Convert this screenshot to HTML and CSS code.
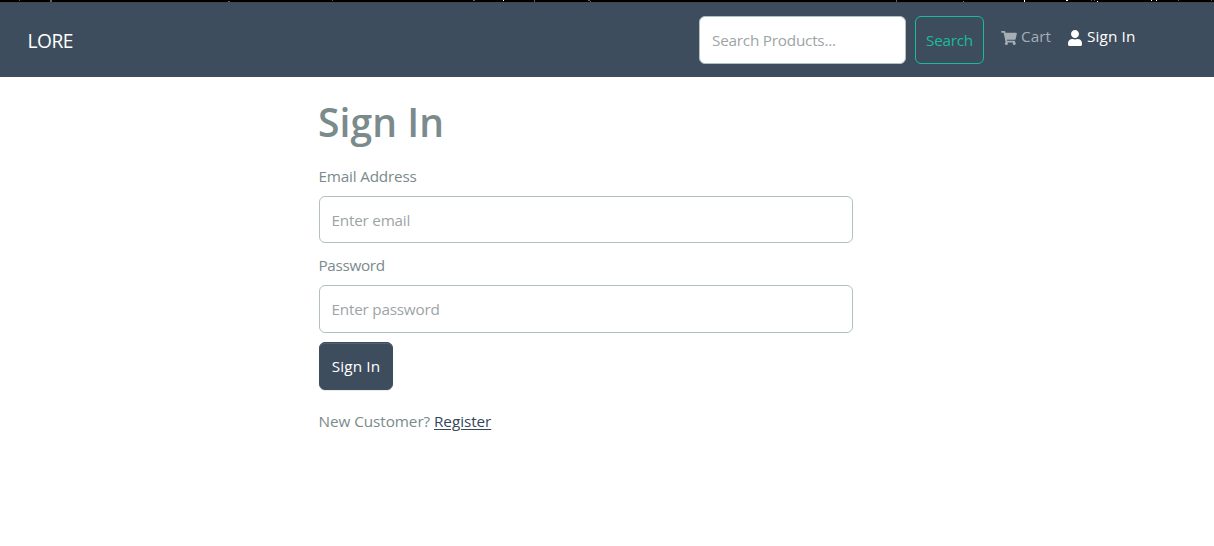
FILE: index.html
```
<!DOCTYPE html>
<html lang="en">
<head>
<meta charset="utf-8">
<title>LORE - Sign In</title>
<link rel="stylesheet" href="styles.css">
</head>
<body>
<div class="strip">
<svg width="1214" height="2" viewBox="0 0 1214 2" shape-rendering="crispEdges"><path fill="#59607f" d="M19 0h1v1h-1zM50 0h2v2h-2zM228 1h2v1h-2zM332 0h1v1h-1zM473 0h2v1h-2zM534 0h1v2h-1zM588 0h2v1h-2zM590 1h1v1h-1zM896 0h1v2h-1zM1091 0h1v1h-1zM1094 0h1v1h-1zM1178 0h1v1h-1zM1211 0h1v1h-1z"/><path fill="#777" d="M963 1h1v1h-1z"/><path fill="#fff" d="M503 0h1v1h-1zM1024 0h1v2h-1zM1066 0h2v1h-2zM1097 1h1v1h-1zM1151 0h1v1h-1zM1156 0h1v1h-1z"/></svg>
</div>
<header class="navbar">
  <a class="brand">LORE</a>
  <form class="search">
    <input class="search-input" type="text" placeholder="Search Products...">
    <button class="search-button" type="button">Search</button>
  </form>
  <nav class="links">
    <a class="link cart"><svg class="cart-icon" viewBox="0 0 576 512"><path fill="currentColor" d="M528.12 301.319l47.273-208C578.806 78.301 567.391 64 551.99 64H159.208l-9.166-44.81C147.758 8.021 137.93 0 126.529 0H24C10.745 0 0 10.745 0 24v16c0 13.255 10.745 24 24 24h69.883l70.248 343.435C147.325 417.1 136 435.222 136 456c0 30.928 25.072 56 56 56s56-25.072 56-56c0-15.674-6.447-29.835-16.824-40h209.647C430.447 426.165 424 440.326 424 456c0 30.928 25.072 56 56 56s56-25.072 56-56c0-22.172-12.888-41.332-31.579-50.405l5.517-24.276c3.413-15.018-8.002-29.319-23.403-29.319H218.117l-6.545-32h293.145c11.206 0 20.92-7.754 23.403-18.681z"/></svg><span class="cart-text">Cart</span></a>
    <a class="link signin"><svg class="user-icon" viewBox="0 0 448 512"><path fill="currentColor" d="M224 256c70.7 0 128-57.3 128-128S294.7 0 224 0 96 57.3 96 128s57.3 128 128 128zm89.600 32h-16.700c-22.200 10.200-46.900 16-72.900 16s-50.600-5.800-72.900-16h-16.700C60.200 288 0 348.200 0 422.400V464c0 26.500 21.500 48 48 48h352c26.500 0 48-21.500 48-48v-41.600c0-74.200-60.200-134.400-134.400-134.400z"/></svg><span class="signin-text">Sign In</span></a>
  </nav>
</header>
<main class="content">
  <h1 class="title">Sign In</h1>
  <form class="form">
    <label class="label email-label" for="email">Email Address</label>
    <input class="field email" id="email" type="email" placeholder="Enter email">
    <label class="label password-label" for="password">Password</label>
    <input class="field password" id="password" type="password" placeholder="Enter password">
    <button class="submit" type="button">Sign In</button>
  </form>
  <p class="register"><span class="customer">New Customer?</span> <a class="register-link">Register</a></p>
</main>
</body>
</html>
```
FILE: styles.css
```
* { box-sizing: border-box; }
body { margin: 0; height: 546px; overflow: hidden; background: #fff; color: #7b8a8b; font: 15.3px/24px "Open Sans", "Noto Sans", sans-serif; }
input, button { font: inherit; margin: 0; }
.strip { height: 3px; background: #000; border-bottom: 1px solid #444; }
.strip svg { display: block; }
.navbar { height: 74px; background: #3e4d5d; display: flex; align-items: flex-start; padding: 13px 78px 0 27.5px; }
.brand { color: #fff; font-size: 19.2px; line-height: 50px; letter-spacing: -.5px; margin-right: auto; }
.search { display: flex; gap: 9px; }
.search-input { width: 207px; height: 48px; border: 1px solid #b2c0c0; border-radius: 6px; padding: 0 12px 1px; background: #fff; letter-spacing: -.23px; }
input::placeholder { color: #9da4a6; opacity: 1; }
.search-button { width: 69px; height: 48px; border: 1px solid #18bc9c; border-radius: 6px; background: transparent; color: #18bc9c; padding: 0 0 1px; letter-spacing: -.25px; }
.links { display: flex; margin-left: 17px; padding-top: 8px; }
.link { display: flex; color: #a5adb5; }
.cart { width: 67px; }
.cart-icon { width: 16px; height: 14px; margin: 7px 4px 0 0; }
.signin { color: #fff; width: 68px; }
.user-icon { width: 14px; height: 16px; margin: 6px 5px 0 0; }
.link span { white-space: nowrap; letter-spacing: 0; }
.signin .signin-text { letter-spacing: .13px; }
.content { width: 534px; margin-left: 319px; padding-top: 21px; }
.title { margin: 0 0 0 -1px; height: 49px; font-size: 39px; line-height: 48px; font-weight: 600; letter-spacing: .1px; }
.form { display: flex; flex-direction: column; align-items: flex-start; padding-top: 17px; }
.label { letter-spacing: -.2px; margin-left: -.5px; }
.password-label { margin-top: 10px; letter-spacing: -.35px; }
.field { width: 534px; height: 47px; margin-top: 8px; border: 1px solid #b2c0c0; border-radius: 6px; padding: 1px 12px 0 11.5px; letter-spacing: -.23px; }
.password { height: 48px; padding: 0 12px 1px 11.5px; }
.submit { width: 74px; height: 48px; margin-top: 9px; border: 1px solid #3e4d5d; border-radius: 6px; background: #3e4d5d; color: #fff; padding: 0 0 1px; letter-spacing: .13px; box-shadow: inset 0 1px #526272, 0 1px 1px rgba(0,0,0,.08); }
.register { margin: 19px 0 0 -.5px; letter-spacing: -.07px; }
.register-link { color: #34475a; text-decoration: underline; text-underline-offset: 2px; }
```
